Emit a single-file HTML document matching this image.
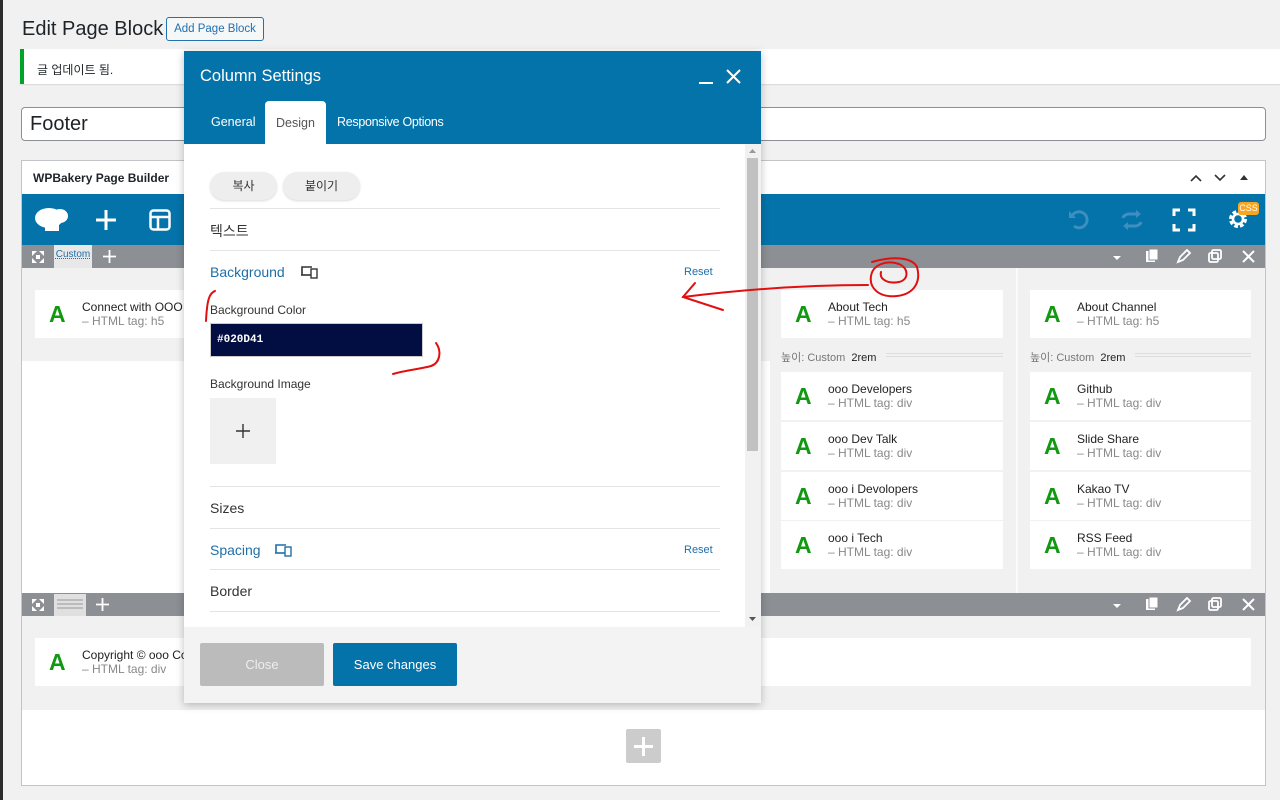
<!DOCTYPE html>
<html><head><meta charset="utf-8">
<style>
*{box-sizing:border-box;margin:0;padding:0}
body{width:1280px;height:800px;background:#f1f1f1;font-family:"Liberation Sans","Noto Sans CJK KR",sans-serif;position:relative;overflow:hidden;color:#1d2327}
.abs{position:absolute}
.card{position:absolute;background:#fff;height:48px}
.card .A{position:absolute;left:14px;top:11px;font:bold 23px "Liberation Sans",sans-serif;color:#119911}
.card .t{position:absolute;left:47px;top:10px;font-size:12px;color:#222}
.card .s{position:absolute;left:47px;top:24px;font-size:12px;color:#888}
.hl{position:absolute;left:26px;right:0;height:1px;background:#e4e4e4}
.lbl{position:absolute;left:26px;font-size:14px;color:#333}
.blue{color:#1e6fa8}
.rbar{position:absolute;left:22px;width:1243px;height:23px;background:#8c8f94}
</style></head><body>
<div class="abs" style="left:0;top:0;width:3px;height:800px;background:#2c2c2c"></div>
<div class="abs" style="left:22px;top:18px;font-size:20px;color:#1d2327">Edit Page Block</div>
<div class="abs" style="left:166px;top:17px;width:98px;height:24px;border:1px solid #2271b1;border-radius:3px;background:#f6f7f7;color:#2271b1;font-size:11.5px;text-align:center;line-height:22px">Add Page Block</div>
<div class="abs" style="left:20px;top:49px;width:1262px;height:35px;background:#fff;border-left:4px solid #00a32a;box-shadow:0 1px 1px rgba(0,0,0,.1)"></div>
<div class="abs" style="left:37px;top:61px;font-size:12px">글 업데이트 됨.</div>
<div class="abs" style="left:21px;top:107px;width:1245px;height:34px;background:#fff;border:1px solid #8c8f94;border-radius:4px"></div>
<div class="abs" style="left:30px;top:113px;font-size:20px">Footer</div>

<div class="abs" style="left:21px;top:160px;width:1245px;height:626px;background:#fff;border:1px solid #c3c4c7"></div>
<div class="abs" style="left:33px;top:171px;font-size:12px;font-weight:bold;color:#1d2327">WPBakery Page Builder</div>
<svg class="abs" style="left:1188px;top:171px" width="70" height="12"><path d="M3 10l5-5 5 5M27 4l5 5 5-5" stroke="#333" stroke-width="1.6" fill="none"/><path d="M52 9l4-5 4 5z" fill="#333"/></svg>
<div class="abs" style="left:22px;top:194px;width:1243px;height:51px;background:#0473aa"></div>
<svg class="abs" style="left:33px;top:204px" width="40" height="30"><ellipse cx="16" cy="14" rx="14" ry="10" fill="#fff"/><ellipse cx="27" cy="12" rx="8" ry="7" fill="#fff"/><rect x="12" y="18" width="14" height="9" fill="#fff"/></svg>
<svg class="abs" style="left:95px;top:209px" width="22" height="22"><path d="M11 1v20M1 11h20" stroke="#fff" stroke-width="3"/></svg>
<svg class="abs" style="left:149px;top:209px" width="22" height="22"><rect x="1.5" y="1.5" width="19" height="19" rx="3" stroke="#fff" stroke-width="2.5" fill="none"/><path d="M2 8h18M9 8v12" stroke="#fff" stroke-width="2.5"/></svg>
<svg class="abs" style="left:1066px;top:207px" width="26" height="26"><path d="M6 9a8 8 0 1 1 2 10" stroke="#3c8fbe" stroke-width="3" fill="none"/><path d="M3 4v7h7" fill="#3c8fbe"/></svg>
<svg class="abs" style="left:1119px;top:208px" width="26" height="24"><path d="M4 10a6 5 0 0 1 6-4h10M22 14a6 5 0 0 1-6 4H6" stroke="#3c8fbe" stroke-width="3" fill="none"/><path d="M17 2l5 4-5 4zM9 14l-5 4 5 4z" fill="#3c8fbe"/></svg>
<svg class="abs" style="left:1172px;top:208px" width="24" height="24"><path d="M2 8V2h6M16 2h6v6M22 16v6h-6M8 22H2v-6" stroke="#fff" stroke-width="3" fill="none"/></svg>
<svg class="abs" style="left:1227px;top:208px" width="22" height="22"><circle cx="11" cy="11" r="7" stroke="#fff" stroke-width="4" stroke-dasharray="3.5 2" fill="none"/><circle cx="11" cy="11" r="5" stroke="#fff" stroke-width="2.5" fill="none"/></svg>
<div class="abs" style="left:1238px;top:202px;width:21px;height:13px;background:#f5a623;border-radius:3px;color:#fff;font-size:9px;text-align:center;line-height:13px">CSS</div>

<div class="rbar" style="top:245px"></div>
<div class="abs" style="left:54px;top:245px;width:38px;height:23px;background:#e8e8e8;font-size:10px;color:#1e6fa8;text-align:center;line-height:20px;text-decoration:underline dotted">Custom</div>
<svg class="abs" style="left:31px;top:250px" width="14" height="14"><path d="M1 1h5L1 6zM13 1v5L8 1zM1 13V8l5 5zM13 13H8l5-5z" fill="#fff"/><rect x="5" y="5" width="4" height="4" fill="#fff"/></svg>
<svg class="abs" style="left:102px;top:249px" width="15" height="15"><path d="M7.5 1v13M1 7.5h13" stroke="#fff" stroke-width="1.8"/></svg>
<svg class="abs" style="left:1110px;top:249px" width="145" height="16"><path d="M3 7l4 4 4-4z" fill="#fff"/><rect x="36" y="2" width="9" height="11" fill="#fff"/><rect x="39" y="0" width="9" height="11" fill="#fff" stroke="#8c8f94"/><path d="M68 13l2-5 7-7 3 3-7 7z" stroke="#fff" stroke-width="1.8" fill="none"/><rect x="99" y="4" width="9" height="9" rx="1.5" stroke="#fff" stroke-width="1.8" fill="none"/><rect x="102" y="1" width="9" height="9" rx="1.5" stroke="#fff" stroke-width="1.8" fill="none"/><path d="M133 2l11 11M144 2l-11 11" stroke="#fff" stroke-width="2"/></svg>

<div class="abs" style="left:22px;top:268px;width:1243px;height:93px;background:#f1f1f1"></div>
<div class="abs" style="left:770px;top:268px;width:495px;height:325px;background:#f1f1f1"></div>
<div class="abs" style="left:1016px;top:268px;width:2px;height:325px;background:#fafafa"></div>
<div class="card" style="left:35px;top:290px;width:160px"><span class="A">A</span><span class="t">Connect with OOO</span><span class="s">– HTML tag: h5</span></div>

<div class="card" style="left:781px;top:290px;width:222px"><span class="A">A</span><span class="t">About Tech</span><span class="s">– HTML tag: h5</span></div>
<div class="card" style="left:1030px;top:290px;width:221px"><span class="A">A</span><span class="t">About Channel</span><span class="s">– HTML tag: h5</span></div>
<div class="abs" style="left:781px;top:349px;font-size:11px;color:#777">높이: Custom <span style="color:#222">&nbsp;2rem</span></div>
<div class="abs" style="left:886px;top:353px;width:117px;height:4px;border-top:1px solid #ddd;border-bottom:1px solid #ddd"></div>
<div class="abs" style="left:1030px;top:349px;font-size:11px;color:#777">높이: Custom <span style="color:#222">&nbsp;2rem</span></div>
<div class="abs" style="left:1135px;top:353px;width:116px;height:4px;border-top:1px solid #ddd;border-bottom:1px solid #ddd"></div>

<div class="card" style="left:781px;top:372px;width:222px"><span class="A">A</span><span class="t">ooo Developers</span><span class="s">– HTML tag: div</span></div>
<div class="card" style="left:781px;top:422px;width:222px"><span class="A">A</span><span class="t">ooo Dev Talk</span><span class="s">– HTML tag: div</span></div>
<div class="card" style="left:781px;top:472px;width:222px"><span class="A">A</span><span class="t">ooo i Devolopers</span><span class="s">– HTML tag: div</span></div>
<div class="card" style="left:781px;top:521px;width:222px"><span class="A">A</span><span class="t">ooo i Tech</span><span class="s">– HTML tag: div</span></div>
<div class="card" style="left:1030px;top:372px;width:221px"><span class="A">A</span><span class="t">Github</span><span class="s">– HTML tag: div</span></div>
<div class="card" style="left:1030px;top:422px;width:221px"><span class="A">A</span><span class="t">Slide Share</span><span class="s">– HTML tag: div</span></div>
<div class="card" style="left:1030px;top:472px;width:221px"><span class="A">A</span><span class="t">Kakao TV</span><span class="s">– HTML tag: div</span></div>
<div class="card" style="left:1030px;top:521px;width:221px"><span class="A">A</span><span class="t">RSS Feed</span><span class="s">– HTML tag: div</span></div>

<div class="rbar" style="top:593px"></div>
<div class="abs" style="left:54px;top:594px;width:32px;height:22px;background:#e0e0e0"></div>
<svg class="abs" style="left:57px;top:599px" width="26" height="10"><path d="M0 1h26M0 5h26M0 9h26" stroke="#999" stroke-width="1"/></svg>
<svg class="abs" style="left:31px;top:598px" width="14" height="14"><path d="M1 1h5L1 6zM13 1v5L8 1zM1 13V8l5 5zM13 13H8l5-5z" fill="#fff"/><rect x="5" y="5" width="4" height="4" fill="#fff"/></svg>
<svg class="abs" style="left:95px;top:597px" width="15" height="15"><path d="M7.5 1v13M1 7.5h13" stroke="#fff" stroke-width="1.8"/></svg>
<svg class="abs" style="left:1110px;top:597px" width="145" height="16"><path d="M3 7l4 4 4-4z" fill="#fff"/><rect x="36" y="2" width="9" height="11" fill="#fff"/><rect x="39" y="0" width="9" height="11" fill="#fff" stroke="#8c8f94"/><path d="M68 13l2-5 7-7 3 3-7 7z" stroke="#fff" stroke-width="1.8" fill="none"/><rect x="99" y="4" width="9" height="9" rx="1.5" stroke="#fff" stroke-width="1.8" fill="none"/><rect x="102" y="1" width="9" height="9" rx="1.5" stroke="#fff" stroke-width="1.8" fill="none"/><path d="M133 2l11 11M144 2l-11 11" stroke="#fff" stroke-width="2"/></svg>
<div class="abs" style="left:22px;top:616px;width:1243px;height:94px;background:#f1f1f1"></div>
<div class="card" style="left:35px;top:638px;width:1216px"><span class="A">A</span><span class="t">Copyright © ooo Co</span><span class="s">– HTML tag: div</span></div>
<div class="abs" style="left:626px;top:729px;width:35px;height:34px;background:#ccc;border-radius:2px"></div>
<svg class="abs" style="left:633px;top:736px" width="21" height="21"><path d="M10.5 1v19M1 10.5h19" stroke="#fff" stroke-width="3"/></svg>

<div class="abs" style="left:184px;top:51px;width:577px;height:652px;background:#fff;box-shadow:0 2px 8px rgba(0,0,0,.25)">
 <div class="abs" style="left:0;top:0;width:577px;height:93px;background:#0473aa"></div>
 <div class="abs" style="left:16px;top:16px;font-size:16.5px;color:#fff">Column Settings</div>
 <div class="abs" style="left:515px;top:31px;width:14px;height:2px;background:#fff"></div>
 <svg class="abs" style="left:542px;top:18px" width="15" height="15"><path d="M1 1l13 13M14 1L1 14" stroke="#fff" stroke-width="2"/></svg>
 <div class="abs" style="left:27px;top:64px;font-size:12.5px;color:#fff">General</div>
 <div class="abs" style="left:81px;top:50px;width:61px;height:44px;background:#fff;border-radius:4px 4px 0 0;font-size:12.5px;color:#555;text-align:center;line-height:44px">Design</div>
 <div class="abs" style="left:153px;top:64px;font-size:12.5px;color:#fff;letter-spacing:-0.3px">Responsive Options</div>

 <div class="abs" style="left:0;top:93px;width:561px;height:483px">
  <div class="abs" style="left:26px;top:28px;width:67px;height:28px;border-radius:14px;background:#eee;box-shadow:0 1px 2px rgba(0,0,0,.15);font-size:12px;text-align:center;line-height:28px;color:#333">복사</div>
  <div class="abs" style="left:99px;top:28px;width:77px;height:28px;border-radius:14px;background:#eee;box-shadow:0 1px 2px rgba(0,0,0,.15);font-size:12px;text-align:center;line-height:28px;color:#333">붙이기</div>
  <div class="hl" style="top:64px;width:510px"></div>
  <div class="lbl" style="top:77px">텍스트</div>
  <div class="hl" style="top:106px;width:510px"></div>
  <div class="lbl blue" style="top:120px">Background</div>
  <svg class="abs" style="left:117px;top:121px" width="18" height="14"><path d="M1 10V2h10" stroke="#333" stroke-width="1.6" fill="none"/><path d="M0 10h10" stroke="#333" stroke-width="1.6"/><rect x="10" y="4" width="6" height="9" stroke="#333" stroke-width="1.4" fill="none"/></svg>
  <div class="abs" style="left:500px;top:122px;font-size:11px;color:#1e6fa8">Reset</div>
  <div class="abs" style="left:26px;top:159px;font-size:12px;color:#333">Background Color</div>
  <div class="abs" style="left:26px;top:179px;width:213px;height:34px;background:#020d41;border:1px solid #ccc;color:#fff;font:bold 11px 'Liberation Mono',monospace;padding:10px 6px">#020D41</div>
  <div class="abs" style="left:26px;top:233px;font-size:12px;color:#333">Background Image</div>
  <div class="abs" style="left:26px;top:254px;width:66px;height:66px;background:#f0f0f0"></div>
  <svg class="abs" style="left:52px;top:280px" width="14" height="14"><path d="M7 0v14M0 7h14" stroke="#333" stroke-width="1.4"/></svg>
  <div class="hl" style="top:342px;width:510px"></div>
  <div class="lbl" style="top:356px">Sizes</div>
  <div class="hl" style="top:384px;width:510px"></div>
  <div class="lbl blue" style="top:398px">Spacing</div>
  <svg class="abs" style="left:91px;top:399px" width="18" height="14"><path d="M1 10V2h10" stroke="#1e6fa8" stroke-width="1.6" fill="none"/><path d="M0 10h10" stroke="#1e6fa8" stroke-width="1.6"/><rect x="10" y="4" width="6" height="9" stroke="#1e6fa8" stroke-width="1.4" fill="none"/></svg>
  <div class="abs" style="left:500px;top:400px;font-size:11px;color:#1e6fa8">Reset</div>
  <div class="hl" style="top:425px;width:510px"></div>
  <div class="lbl" style="top:439px">Border</div>
  <div class="hl" style="top:467px;width:510px"></div>
 </div>
 <div class="abs" style="left:561px;top:93px;width:16px;height:483px;background:#f1f1f1"></div>
 <div class="abs" style="left:563px;top:107px;width:11px;height:293px;background:#c1c1c1"></div>
 <svg class="abs" style="left:564px;top:97px" width="9" height="6"><path d="M1 5l3.5-4 3.5 4z" fill="#999"/></svg>
 <svg class="abs" style="left:564px;top:565px" width="9" height="6"><path d="M1 1l3.5 4 3.5-4z" fill="#555"/></svg>
 <div class="abs" style="left:0;top:576px;width:577px;height:76px;background:#f3f3f3"></div>
 <div class="abs" style="left:16px;top:592px;width:124px;height:43px;background:#bbb;border-radius:2px;color:#eee;font-size:13px;text-align:center;line-height:43px">Close</div>
 <div class="abs" style="left:149px;top:592px;width:124px;height:43px;background:#0473aa;border-radius:2px;color:#fff;font-size:13px;text-align:center;line-height:43px">Save changes</div>
</div>

<svg class="abs" style="left:0;top:0" width="1280" height="800">
<g stroke="#e01010" stroke-width="2" fill="none" stroke-linecap="round">
<path d="M215 291c-6 2-8 10-9 30"/>
<path d="M436 343c6 8 4 20-5 23-10 3-25 4-38 8"/>
<path d="M683 297c40-5 110-12 185-12"/>
<path d="M695 283l-12 14 40 13"/>
<path d="M872 262c20-6 40-5 45 5 4 14-2 27-20 29-18 2-28-8-26-20 2-12 16-16 28-12 10 4 10 16 0 18-10 2-20-2-18-10"/>
</g>
</svg>
</body></html>
